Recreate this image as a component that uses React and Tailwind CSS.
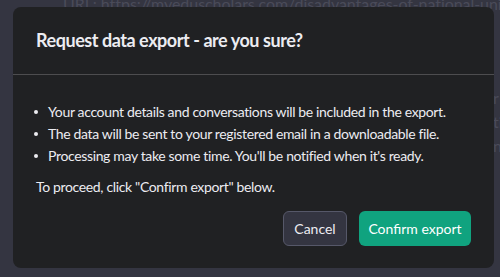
export default function App() {
  const items = [
    "Your account details and conversations will be included in the export.",
    "The data will be sent to your registered email in a downloadable file.",
    "Processing may take some time. You'll be notified when it's ready.",
  ];

  return (
    <div className="relative w-[500px] h-[277px] overflow-hidden bg-[#343541] font-['Lato',sans-serif]">
      <div className="pl-[63px] -mt-[8px] text-[16px] leading-[24px] tracking-[-0.05px] text-[#4a4b59] whitespace-nowrap">
        <p>URL: https://myeduscholars.com/disadvantages-of-national-universities</p>
        <p className="mt-[70px] pl-[430px]">r</p>
        <p className="pl-[430px]">ti</p>
        <p className="pl-[430px]">n</p>
      </div>

      <div className="absolute left-[13px] top-[7px] w-[481px] h-[261px] rounded-lg bg-[#202123] text-[#ececf1] flex flex-col">
        <div className="h-[68px] shrink-0 px-[23px] flex items-center border-b border-[#4d4d4f]">
          <h2 className="text-[18px] font-bold tracking-[-0.45px]">Request data export - are you sure?</h2>
        </div>

        <div className="px-[23px] pt-[26px] text-[14px] leading-[22px] tracking-[-0.35px]">
          <ul className="mb-[9px]">
            {items.map((t) => (
              <li key={t} className="flex items-center whitespace-nowrap">
                <span className="-ml-[2px] mr-[10px] w-[4px] h-[4px] shrink-0 rounded-full bg-[#ececf1]" />
                <span>{t}</span>
              </li>
            ))}
          </ul>
          <p>To proceed, click "Confirm export" below.</p>

          <div className="mt-[13px] flex justify-end gap-3 tracking-normal">
            <button className="w-[64px] h-[35px] rounded-md border border-[#565869] bg-[#343541] text-[14px]">
              Cancel
            </button>
            <button className="w-[112px] h-[35px] rounded-md bg-[#10a37f] text-white text-[14px]">
              Confirm export
            </button>
          </div>
        </div>
      </div>
    </div>
  );
}
